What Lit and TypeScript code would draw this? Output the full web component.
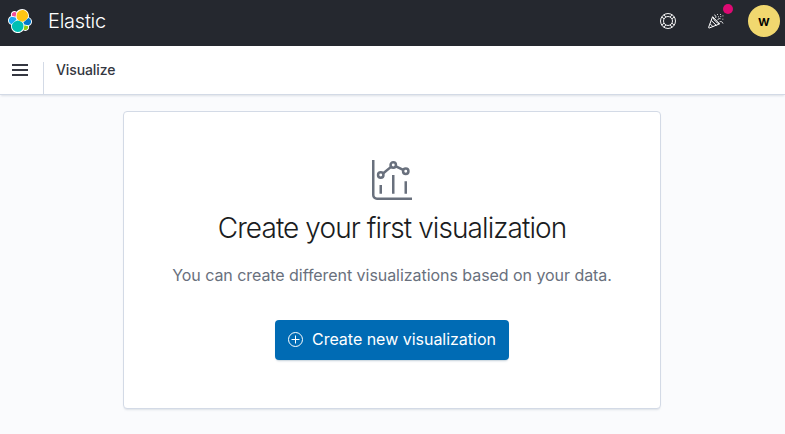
import { LitElement, html, css, svg } from "lit";
import { customElement } from "lit/decorators.js";

const logo = svg`
  <path fill="#fff" d="M32 16.77c0-2.68-1.66-5.03-4.17-5.92.11-.57.17-1.15.17-1.76C28 4.07 23.93 0 18.91 0c-2.93 0-5.65 1.39-7.36 3.75a4.8 4.8 0 00-2.93-1c-2.65 0-4.82 2.16-4.82 4.82 0 .58.1 1.14.29 1.66A6.36 6.36 0 000 15.2c0 2.7 1.67 5.05 4.19 5.93a9 9 0 00-.17 1.76c0 5 4.07 9.07 9.07 9.07 2.94 0 5.65-1.41 7.35-3.77.84.66 1.87 1.02 2.94 1.02 2.65 0 4.82-2.16 4.82-4.82 0-.58-.1-1.14-.29-1.66A6.38 6.38 0 0032 16.77"/>
  <path fill="#f04e98" d="M5.288 9.067l4.8 1.137L11.14 4.75A3.785 3.785 0 005.06 7.75c0 .45.08.9.23 1.32"/>
  <path fill="#1ba9f5" d="M4.872 10.214c-2.14.71-3.64 2.78-3.64 5.038 0 2.2 1.36 4.16 3.4 4.94l6.73-6.09-1.235-2.643z"/>
  <path fill="#93c90e" d="M20.873 27.185a3.75 3.75 0 002.293.795 3.786 3.786 0 003.567-5.09l-4.795-1.12z"/>
  <path fill="#07c" d="M21.848 20.562l5.279 1.237c2.145-.71 3.64-2.78 3.64-5.04a5.28 5.28 0 00-3.4-4.93l-6.9 6.06z"/>
  <path fill="#fec514" d="M12.3 13.2c1.6 2 4.8 3.7 7.2 3.7 3.6-.8 6.3-3.3 7.1-6.1a7.85 7.85 0 00.2-1.6c0-4.3-3.48-7.78-7.77-7.78a7.77 7.77 0 00-6.41 3.4c-1.5 2.2-1.6 5.9-.32 8.38z"/>
  <path fill="#00bfb3" d="M5.333 21.215a8 8 0 00-.15 1.58c0 4.303 3.495 7.804 7.79 7.804a7.78 7.78 0 006.44-3.417c1.5-2.2 1.7-6.2.2-8.5-1.5-2-4.8-3.5-7.2-3.5-3.5.8-6.2 3.2-7.08 6.03z"/>`;

@customElement("app-root")
export class AppRoot extends LitElement {
  static styles = css`
    :host {
      display: flex;
      flex-direction: column;
      height: 100vh;
      box-sizing: border-box;
      overflow: hidden;
      background: #fafbfd;
      color: #343741;
      font-family: Inter, "Liberation Sans", sans-serif;
    }
    svg { display: block; fill: none; }
    .top {
      flex: none;
      display: flex;
      align-items: center;
      height: 46px;
      padding: 0 5px 4px 8px;
      box-sizing: border-box;
      background: #25282f;
      color: #fff;
    }
    .brand { margin-left: 16px; font-size: 20px; font-weight: 300; line-height: 24px; letter-spacing: -0.25px; }
    .tools { display: flex; align-items: center; margin-left: auto; }
    .news { position: relative; margin: 0 24px 0 32px; }
    .dot { position: absolute; left: 15px; top: -9px; width: 10px; height: 10px; border-radius: 50%; background: #dd0a73; }
    .avatar {
      width: 32px; height: 32px; border-radius: 50%;
      background: #f1d86f; color: #000;
      font-size: 14px; font-weight: 600; line-height: 32px; text-align: center;
    }
    .nav {
      flex: none;
      display: flex;
      height: 49px;
      box-sizing: border-box;
      background: #fff;
      border-bottom: 1px solid #d3dae6;
      box-shadow: 0 2px 2px -1px rgba(152, 162, 179, 0.3);
    }
    .menu { width: 43px; box-sizing: border-box; padding: 16px 0 0 12px; }
    .crumb {
      margin-top: 16px; padding-left: 12px; border-left: 1px solid #d3dae6;
      font-size: 14px; font-weight: 500; line-height: 16px; letter-spacing: -0.1px;
    }
    .panel {
      flex: none;
      width: 538px; height: 298px;
      margin: 16px 0 0 123px;
      box-sizing: border-box;
      padding-top: 48px;
      display: flex; flex-direction: column; align-items: center;
      background: #fff;
      border: 1px solid #d3dae6; border-radius: 4px;
      box-shadow: 0 2px 2px -1px rgba(152, 162, 179, 0.3);
    }
    h1 { margin: 8px 0 0; color: #1a1c21; font-size: 28px; font-weight: 300; line-height: 40px; letter-spacing: -0.92px; white-space: nowrap; }
    p { margin: 15px 0 0; color: #69707d; font-size: 16px; line-height: 24px; letter-spacing: -0.05px; white-space: nowrap; }
    button {
      display: flex; align-items: center; gap: 8px;
      width: 234px; height: 40px; margin-top: 33px; padding: 0 12px 0 13px;
      border: 0; border-radius: 4px; background: #006bb4; color: #fff;
      font: 400 16px/24px Inter, "Liberation Sans", sans-serif;
      letter-spacing: -0.02px;
      white-space: nowrap;
      box-shadow: 0 2px 2px -1px rgba(54, 97, 126, 0.3);
    }
    button span { padding-bottom: 2px; }
  `;

  render() {
    return html`
      <header class="top">
        <svg width="24" height="24" viewBox="0 0 32 32">${logo}</svg>
        <span class="brand">Elastic</span>
        <div class="tools">
          <svg width="16" height="16" viewBox="0 0 16 16" stroke="#fff" stroke-width="0.95">
            <circle cx="8" cy="8" r="7.5" />
            <circle cx="8" cy="8" r="4.5" />
            <path d="M1.7 4L4.1 5.8M4 1.7L5.8 4.1M14.3 4L11.9 5.8M12 1.7L10.2 4.1M1.7 12L4.1 10.2M4 14.3L5.8 11.9M14.3 12L11.9 10.2M12 14.3L10.2 11.9" />
          </svg>
          <div class="news">
            <svg width="16" height="16" viewBox="0 0 16 16" stroke="#fff" stroke-linejoin="round">
              <path d="M4.6 3.7L.6 14.4c-.1.4.2.7.6.6l10.4-4.1zM3.3 7.5l5.2 5.1M2.1 10.8l3.2 3.2M4.8 3.9c.6 2.6 3.7 6.2 6.7 6.9" />
              <path stroke-width="0.9" d="M6.3 1.9c1.3.3 2 1.5 1.4 3M9.2 7.3c1-1.5 2-2 3.3-1.6M11.6 8.8c1.5-.6 2.9 0 3.4 1.7" />
              <path stroke-linecap="round" stroke-width="0.9" d="M9.5 1.5h.1M10.5 3.8h.1M12.5 1.5h.1M12.7 3.6h.1M14.9 2.9h.1M14.8 6.2h.1" />
            </svg>
            <span class="dot"></span>
          </div>
          <div class="avatar">w</div>
        </div>
      </header>
      <nav class="nav">
        <div class="menu">
          <svg width="16" height="16" viewBox="0 0 16 16">
            <path fill="#343741" d="M0 2h16v2H0zM0 7h16v2H0zM0 12h16v2H0z" />
          </svg>
        </div>
        <div class="crumb">Visualize</div>
      </nav>
      <main class="panel">
        <svg width="40" height="40" viewBox="0 0 40 40" stroke="#69707d" stroke-width="2.5">
          <path d="M1.25 0v35a3.75 3.75 0 003.75 3.75h35M8.75 25v8.75M21.25 15v18.75M33.75 21.25v12.5M11.3 13.2l7.4-6.1M23.9 6.3l7.3 3.6" />
          <circle cx="8.75" cy="15" r="2.7" />
          <circle cx="21.25" cy="5" r="2.7" />
          <circle cx="33.75" cy="11.25" r="2.7" />
        </svg>
        <h1>Create your first visualization</h1>
        <p>You can create different visualizations based on your data.</p>
        <button>
          <svg width="16" height="16" viewBox="0 0 16 16" stroke="#fff">
            <circle cx="7.5" cy="7.5" r="7" />
            <path d="M3.5 7.5h8M7.5 3.5v8" />
          </svg>
          <span>Create new visualization</span>
        </button>
      </main>
    `;
  }
}
